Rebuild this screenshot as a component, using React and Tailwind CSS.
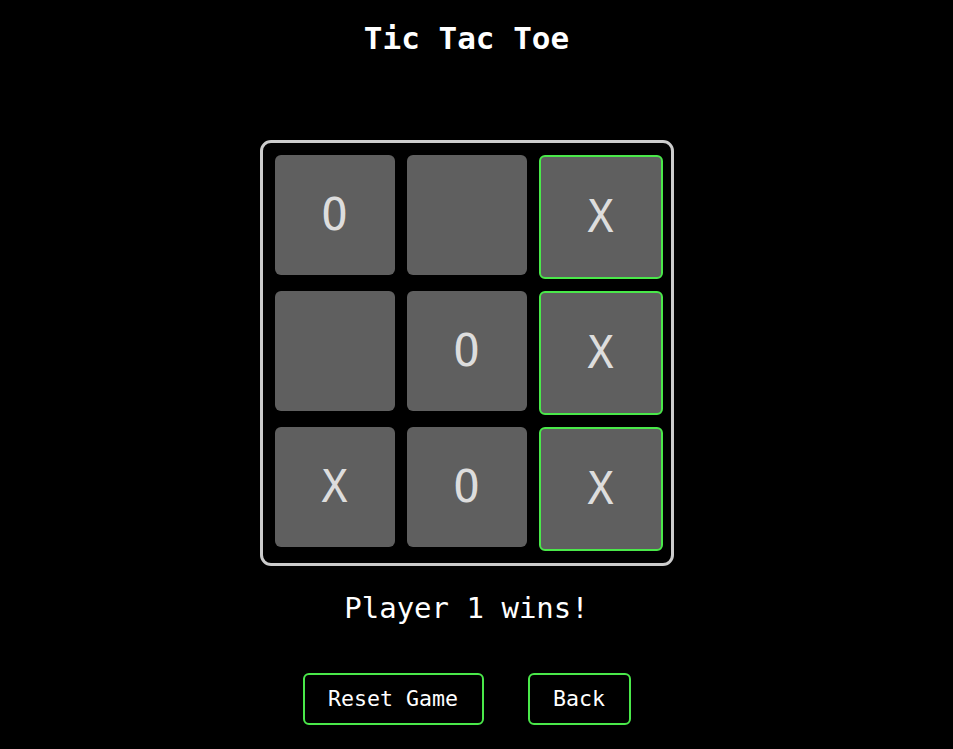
import React from "react";

const cells = [
  { v: "O" }, { v: "" }, { v: "X", win: true },
  { v: "" }, { v: "O" }, { v: "X", win: true },
  { v: "X" }, { v: "O" }, { v: "X", win: true },
];

export default function App() {
  return (
    <div
      className="min-h-[749px] w-[933px] bg-black flex flex-col items-center text-white"
      style={{ fontFamily: "'DejaVu Sans Mono', 'Liberation Mono', monospace" }}
    >
      <div className="fixed inset-0 bg-black -z-10" />
      <h1 className="mt-[20px] text-[31px] leading-[36px] font-bold text-white">Tic Tac Toe</h1>
      <div className="mt-[84px] border-[3px] border-[#cccccc] rounded-[11px] p-3">
        <div className="grid grid-cols-[repeat(3,120px)] gap-3">
          {cells.map((c, i) =>
            c.win ? (
              <div
                key={i}
                className="w-[124px] h-[124px] border-2 border-[#4ae84a] rounded-md bg-[#5f5f5f] flex items-center justify-center text-[44px] leading-none text-[#dddddd]"
              >
                {c.v}
              </div>
            ) : (
              <div
                key={i}
                className="w-[120px] h-[120px] rounded-md bg-[#5f5f5f] flex items-center justify-center text-[44px] leading-none text-[#dddddd]"
              >
                {c.v}
              </div>
            )
          )}
        </div>
      </div>
      <div className="mt-[25px] text-[29px] leading-[34px]">Player 1 wins!</div>
      <div className="mt-[48px] flex gap-[44px]">
        <button className="h-[52px] w-[181px] border-2 border-[#4ae84a] rounded-md bg-black text-white text-[21.6px] flex items-center justify-center">
          Reset Game
        </button>
        <button className="h-[52px] w-[103px] border-2 border-[#4ae84a] rounded-md bg-black text-white text-[21.6px] flex items-center justify-center">
          Back
        </button>
      </div>
    </div>
  );
}
